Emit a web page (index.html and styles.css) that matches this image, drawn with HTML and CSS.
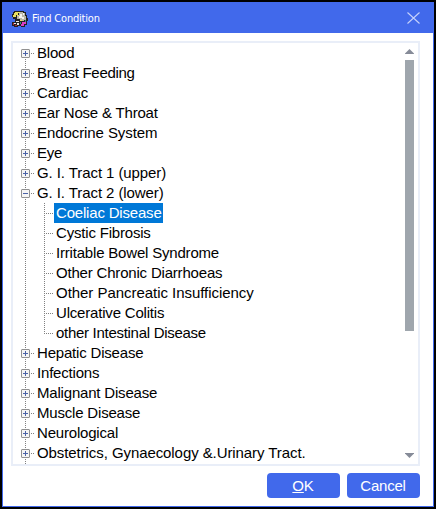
FILE: index.html
```
<!DOCTYPE html>
<html lang="en">
  <head>
    <meta charset="UTF-8" />
    <meta name="viewport" content="width=device-width, initial-scale=1.0" />
    <title>Find Condition</title>
    <link rel="stylesheet" href="styles.css">
  </head>
  <body>
    <div class="window">
      <div class="titlebar">
        <svg class="app-icon" width="16" height="16" viewBox="0 0 16 16" shape-rendering="crispEdges">
          <path fill="#222" d="M2 0h10v1h2v3h1v3h1v3h-1v4h-2v2H9v-1H6v1H2v-1H0v-4h3V8H1V6H0V3h1V1h1z" />
          <path fill="#e8df62" d="M3 1h5v1H6v2H4v2H1V4h1V2h1z" />
          <path fill="#b9b6a6" d="M8 1h3v1h2v3h1v4h-2v1H8V8H5V5h2V2h1z" />
          <path fill="#f4f2ee" d="M8 3h2v3h2v2h-2V7H7V5h1zM11 2h1v2h-1z" />
          <path fill="#e8df62" d="M5 4h2v1H5zM8 9h2v1H8z" />
          <path fill="#e8e8e8" d="M4 10h3v1H4zM2 12h2v1H2zM5 12h2v2H5z" />
          <path fill="#d83fc4" d="M10 11h4v2h-2v2H9v-2h1z" />
          <path fill="#b92b39" d="M1 12h1v2H1zM3 14h2v1H3z" />
          <path fill="#3d8d82" d="M13 9h1v2h-1zM8 11h1v2H8z" />
        </svg>
        <span class="title">Find Condition</span>
        <svg class="close" width="13" height="12" viewBox="0 0 13 12">
          <path d="M.5 0.5l12 11M12.5 0.5l-12 11" stroke="#c6d2fb" stroke-width="1.1" fill="none" />
        </svg>
      </div>

      <div class="content">
        <div class="tree-box">
          <ul class="tree">
            <li><i class="toggle"></i><span>Blood</span></li>
            <li><i class="toggle"></i><span class="tight">Breast Feeding</span></li>
            <li><i class="toggle"></i><span class="loose">Cardiac</span></li>
            <li><i class="toggle"></i><span>Ear Nose &amp; Throat</span></li>
            <li><i class="toggle"></i><span class="loose">Endocrine System</span></li>
            <li><i class="toggle"></i><span>Eye</span></li>
            <li><i class="toggle"></i><span class="loose">G. I. Tract 1 (upper)</span></li>
            <li>
              <i class="toggle open"></i><span class="loose">G. I. Tract 2 (lower)</span>
              <ul class="branch">
                <li><span class="selected">Coeliac Disease</span></li>
                <li><span>Cystic Fibrosis</span></li>
                <li><span>Irritable Bowel Syndrome</span></li>
                <li><span>Other Chronic Diarrhoeas</span></li>
                <li><span class="normal">Other Pancreatic Insufficiency</span></li>
                <li><span>Ulcerative Colitis</span></li>
                <li><span class="tight">other Intestinal Disease</span></li>
              </ul>
            </li>
            <li><i class="toggle"></i><span>Hepatic Disease</span></li>
            <li><i class="toggle"></i><span>Infections</span></li>
            <li><i class="toggle"></i><span>Malignant Disease</span></li>
            <li><i class="toggle"></i><span>Muscle Disease</span></li>
            <li><i class="toggle"></i><span>Neurological</span></li>
            <li><i class="toggle"></i><span class="loose">Obstetrics, Gynaecology &amp;.Urinary Tract.</span></li>
          </ul>
          <div class="scrollbar">
            <svg width="9" height="5" viewBox="0 0 9 5"><path fill="#868b98" d="M4.5 0L9 4.5V5H0v-.5z" /></svg>
            <div class="track"><div class="thumb"></div></div>
            <svg width="9" height="5" viewBox="0 0 9 5"><path fill="#868b98" d="M4.5 5L9 .5V0H0v.5z" /></svg>
          </div>
        </div>
        <div class="buttons">
          <button type="button"><u>O</u>K</button>
          <button type="button">Cancel</button>
        </div>
      </div>
    </div>
  </body>
</html>
```
FILE: styles.css
```
* {
  box-sizing: border-box;
}
body {
  margin: 0;
  padding: 2px;
  height: 509px;
  background-color: #000;
  font-family: "Liberation Sans", Arial, sans-serif;
  font-size: 15px;
  color: #000;
  overflow: hidden;
}
.window {
  width: 432px;
  height: 505px;
  border: 1px solid #4169eb;
  background-color: #fff;
}
.titlebar {
  display: flex;
  align-items: center;
  height: 30px;
  padding: 0 13px 0 9px;
  background-color: #4169eb;
  color: #fff;
}
.app-icon {
  margin-top: 2px;
}
.title {
  flex: 1;
  margin-left: 4px;
  font-family: "DejaVu Sans", sans-serif;
  font-stretch: condensed;
  font-size: 11px;
  letter-spacing: -0.2px;
}
.content {
  padding: 8px 13px 0 8px;
}
.tree-box {
  display: flex;
  height: 425px;
  border: 2px solid #e9eef8;
}
.tree,
.branch {
  list-style: none;
  margin: 0;
  padding: 0;
}
.tree {
  flex: 1;
  padding-left: 8px;
  overflow: hidden;
  white-space: nowrap;
  background: repeating-linear-gradient(#808080 0 1px, #fff 1px 2px) 12px 10px / 1px 100% no-repeat;
}
.tree li {
  line-height: 20px;
}
.tree > li {
  display: grid;
  grid-template-columns: 15px 1fr;
  align-items: start;
}
.tree span {
  justify-self: start;
  height: 20px;
  padding: 0 1px;
  letter-spacing: -0.19px;
}
.tree .tight {
  letter-spacing: -0.29px;
}
.tree .loose {
  letter-spacing: -0.08px;
}
.tree .normal {
  letter-spacing: -0.04px;
}
/* the box, its sign and the short dotted stub to the label */
.toggle {
  position: relative;
  width: 9px;
  height: 9px;
  margin-top: 6px;
  border: 1px solid #919191;
  border-radius: 1px;
  background:
    linear-gradient(#4b63a7, #4b63a7) center / 5px 1px no-repeat,
    linear-gradient(#4b63a7, #4b63a7) center / 1px 5px no-repeat,
    #f5f5f5;
}
.toggle.open {
  background:
    linear-gradient(#4b63a7, #4b63a7) center / 5px 1px no-repeat,
    #f5f5f5;
}
.toggle::after {
  content: "";
  position: absolute;
  left: 9px;
  top: 3px;
  width: 3px;
  height: 1px;
  background: repeating-linear-gradient(90deg, #808080 0 1px, #fff 1px 2px);
}
.branch {
  grid-column: 1 / 3;
  margin-left: 23px;
  background: repeating-linear-gradient(#808080 0 1px, #fff 1px 2px) 0 0 / 1px 130px no-repeat;
}
.branch li {
  display: flex;
  padding-left: 10px;
  background: repeating-linear-gradient(90deg, #808080 0 1px, #fff 1px 2px) 0 10px / 9px 1px no-repeat;
}
.tree .branch span {
  padding: 0 1px 0 2px;
}
.tree .selected {
  background-color: #0078d7;
  color: #fff;
}
.scrollbar {
  display: flex;
  flex-direction: column;
  width: 9px;
  margin: 6px 4px 6px 0;
}
.track {
  flex: 1;
  padding-top: 6px;
}
.thumb {
  height: 271px;
  background-color: #9fa6ad;
}
.buttons {
  display: flex;
  justify-content: flex-end;
  gap: 7px;
  margin-top: 7px;
}
.buttons button {
  width: 73px;
  height: 25px;
  padding: 0 1px 0 0;
  border: none;
  border-radius: 4px;
  background-color: #4169eb;
  color: #fff;
  font: inherit;
  letter-spacing: -0.2px;
}
```
